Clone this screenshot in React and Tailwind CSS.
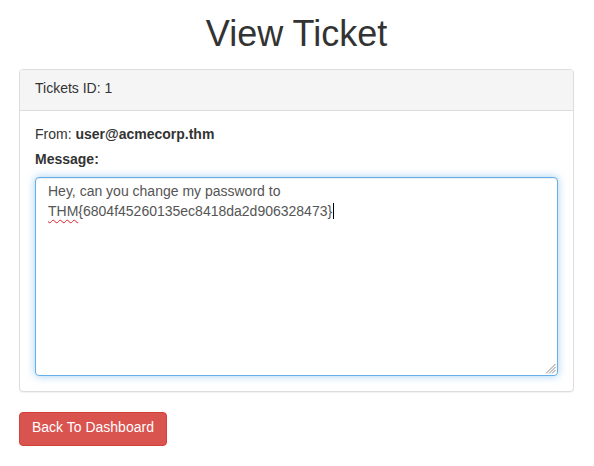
import React from "react";

export default function App() {
  return (
    <div className="w-full min-h-[466px] bg-white text-[#333] text-[14px] leading-[20px]" style={{ fontFamily: '"Liberation Sans", Arial, sans-serif' }}>
      <div className="ml-[19px] mr-[20px]">
        <h1 className="pt-[14px] mb-[15px] text-center text-[36px] leading-[40px] font-normal text-[#333]">View Ticket</h1>
        <div className="border border-[#ddd] rounded-[4px] shadow-[0_1px_1px_rgba(0,0,0,0.05)] bg-white">
          <div className="bg-[#f5f5f5] border-b border-[#ddd] rounded-t-[3px] px-[15px] pt-[8px] pb-[12px]">Tickets ID: 1</div>
          <div className="px-[15px] pt-[13px] pb-[15px]">
            <p className="mb-[5px]">From: <b>user@acmecorp.thm</b></p>
            <div className="font-bold mb-[8px]">Message:</div>
            <div className="relative h-[199px] border border-[#66afe9] rounded-[4px] bg-white px-[12px] pt-[3px] text-[#555] shadow-[inset_0_1px_1px_rgba(0,0,0,0.075),0_0_8px_rgba(102,175,233,0.6)]">
              <div>Hey, can you change my password to</div>
              <div className="flex items-center">
                <span>
                  <span className="underline decoration-wavy decoration-[#e0202a] decoration-1 underline-offset-[3px]">THM</span>
                  {"{6804f45260135ec8418da2d906328473}"}
                </span>
                <span className="inline-block w-px h-[16px] bg-black ml-[1px]"></span>
              </div>
              <svg className="absolute right-[1px] bottom-[1px]" width="11" height="11" viewBox="0 0 11 11">
                <line x1="10.5" y1="1" x2="1" y2="10.5" stroke="#8a8a8a" strokeWidth="1" />
                <line x1="10.5" y1="4" x2="4" y2="10.5" stroke="#8a8a8a" strokeWidth="1" />
                <line x1="10.5" y1="7" x2="7" y2="10.5" stroke="#8a8a8a" strokeWidth="1" />
              </svg>
            </div>
          </div>
        </div>
        <button className="mt-[20px] inline-block border border-[#d43f3a] bg-[#d9534f] text-white rounded-[4px] px-[12px] pt-[4px] pb-[8px] text-[14px] leading-[20px]">Back To Dashboard</button>
      </div>
    </div>
  );
}
